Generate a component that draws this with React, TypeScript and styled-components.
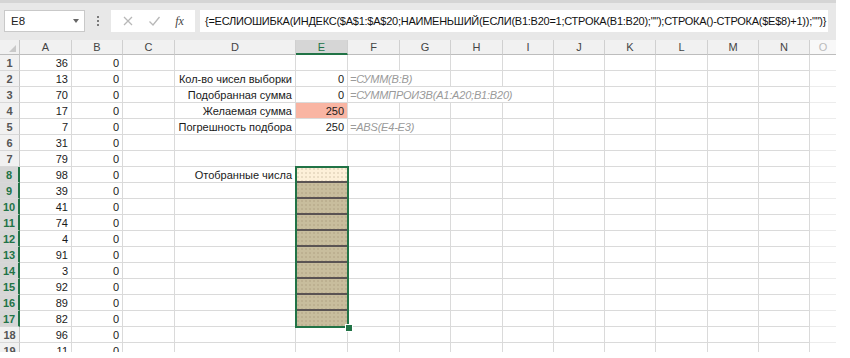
import React from "react";
import styled, { createGlobalStyle, css } from "styled-components";

const GlobalStyle = createGlobalStyle`
  html, body {
    margin: 0;
    padding: 0;
    background: #fff;
  }
  body {
    font-family: "Liberation Sans", Arial, sans-serif;
    color: #222;
  }
`;

const COLS = [20, 52, 51, 52, 121, 52, 52, 51, 52, 51, 51, 51, 52, 51, 51, 26];
const LETTERS = ["A", "B", "C", "D", "E", "F", "G", "H", "I", "J", "K", "L", "M", "N", "O"];

const AVALUES = [36, 13, 70, 17, 7, 31, 79, 98, 39, 41, 74, 4, 91, 3, 92, 89, 82, 96, 11];

const LABELS: Record<number, string> = {
  2: "Кол-во чисел выборки",
  3: "Подобранная сумма",
  4: "Желаемая сумма",
  5: "Погрешность подбора",
  8: "Отобранные числа",
};

const EVALUES: Record<number, string> = { 2: "0", 3: "0", 4: "250", 5: "250" };

const FORMULAS: Record<number, string> = {
  2: "=СУММ(B:B)",
  3: "=СУММПРОИЗВ(A1:A20;B1:B20)",
  5: "=ABS(E4-E3)",
};

const Page = styled.div`
  width: 850px;
  height: 358px;
  overflow: hidden;
  background: #fff;
`;

const FormulaBar = styled.div`
  border-top: 3px solid #d5d5d5;
  background: #e8e8e8;
  display: flex;
  align-items: flex-start;
  padding: 7px 0 0 4px;
  box-sizing: border-box;
  height: 40px;
  width: 836px;
`;

const NameBox = styled.div`
  width: 81px;
  height: 22px;
  box-sizing: border-box;
  background: #fff;
  border: 1px solid #c9c9c9;
  display: flex;
  align-items: center;
  justify-content: space-between;
  padding: 0 5px 0 6px;
  font-size: 11.5px;
  color: #222;
`;

const Caret = styled.span`
  width: 0;
  height: 0;
  border-left: 3px solid transparent;
  border-right: 3px solid transparent;
  border-top: 4px solid #666;
`;

const Grip = styled.div`
  width: 26px;
  height: 22px;
  display: flex;
  flex-direction: column;
  align-items: center;
  justify-content: center;
  gap: 2px;
  & span {
    width: 2px;
    height: 2px;
    background: #7a7a7a;
  }
`;

const FxPanel = styled.div`
  width: 84px;
  height: 22px;
  box-sizing: border-box;
  background: #fff;
  display: flex;
  align-items: center;
  justify-content: space-around;
  padding: 0 4px;
`;

const FxLabel = styled.span`
  font-family: "Liberation Serif", serif;
  font-style: italic;
  font-size: 12px;
  color: #444;
`;

const FormulaInput = styled.div`
  margin-left: 5px;
  width: 628px;
  height: 22px;
  box-sizing: border-box;
  background: #fff;
  display: flex;
  align-items: center;
  padding-left: 5px;
  font-size: 11px;
  letter-spacing: -0.25px;
  white-space: nowrap;
  overflow: hidden;
  color: #111;
`;

const SheetClip = styled.div`
  height: 312px;
  overflow: hidden;
`;

const Sheet = styled.div`
  position: relative;
  display: grid;
  grid-template-columns: ${COLS.map((c) => `${c}px`).join(" ")};
  grid-template-rows: 15px;
  grid-auto-rows: 16px;
  width: 836px;
  font-size: 11px;
`;

const ColHead = styled.div<{ $active?: boolean; $faded?: boolean }>`
  box-sizing: border-box;
  background: #f1f1f1;
  border-right: 1px solid #d0d0d0;
  border-bottom: 1px solid #bdbdbd;
  display: flex;
  align-items: center;
  justify-content: center;
  font-size: 11px;
  color: #444;
  ${(p) =>
    p.$active &&
    css`
      background: #d6d6d6;
      color: #217346;
      border-bottom: 2px solid #217346;
    `}
  ${(p) =>
    p.$faded &&
    css`
      background: #f8f8f8;
      color: #bbb;
      border-right: none;
    `}
`;

const Corner = styled.div`
  box-sizing: border-box;
  background: #f1f1f1;
  border-right: 1px solid #c6c6c6;
  border-bottom: 1px solid #bdbdbd;
  display: flex;
  align-items: flex-end;
  justify-content: flex-end;
  padding: 0 3px 2px 0;
  &::after {
    content: "";
    width: 0;
    height: 0;
    border-left: 7px solid transparent;
    border-bottom: 7px solid #c9c9c9;
  }
`;

const RowHead = styled.div<{ $active?: boolean }>`
  box-sizing: border-box;
  background: #f1f1f1;
  border-right: 1px solid #c6c6c6;
  border-bottom: 1px solid #d8d8d8;
  display: flex;
  align-items: center;
  justify-content: center;
  font-size: 11px;
  font-weight: bold;
  color: #555;
  ${(p) =>
    p.$active &&
    css`
      background: #d6d6d6;
      color: #217346;
      border-right: 2px solid #217346;
    `}
`;

type Fill = "none" | "salmon" | "peach" | "tan";

const fills: Record<Fill, string> = {
  none: "transparent",
  salmon: "#f9b5a3",
  peach: "#fdf0d9",
  tan: "#c8bd9d",
};

const Cell = styled.div<{ $span?: number; $fill?: Fill; $divider?: boolean; $faded?: boolean }>`
  box-sizing: border-box;
  grid-column: span ${(p) => p.$span ?? 1};
  border-right: 1px solid #dadada;
  border-bottom: 1px solid #dadada;
  background-color: ${(p) => fills[p.$fill ?? "none"]};
  display: flex;
  align-items: center;
  justify-content: flex-end;
  padding: 0 3px;
  white-space: nowrap;
  overflow: hidden;
  color: #1a1a1a;
  ${(p) =>
    (p.$fill === "peach" || p.$fill === "tan") &&
    css`
      background-image: radial-gradient(rgba(120, 100, 70, 0.3) 0.6px, transparent 0.8px);
      background-size: 4px 4px;
    `}
  ${(p) =>
    p.$divider &&
    css`
      border-bottom: 2px solid #5a5353;
    `}
  ${(p) =>
    p.$faded &&
    css`
      border-right: none;
      border-bottom-color: #ececec;
    `}
`;

const FormulaNote = styled(Cell)`
  justify-content: flex-start;
  padding-left: 2px;
  font-style: italic;
  letter-spacing: -0.2px;
  color: #9a9a9a;
`;

const Selection = styled.div`
  position: absolute;
  left: 295px;
  top: 126px;
  width: 54px;
  height: 162px;
  box-sizing: border-box;
  border: 2px solid #217346;
  pointer-events: none;
`;

const Handle = styled.div`
  position: absolute;
  left: 345px;
  top: 284px;
  width: 6px;
  height: 6px;
  background: #217346;
  border: 1px solid #fff;
`;

const XIcon = () => (
  <svg width="12" height="12" viewBox="0 0 12 12">
    <path d="M2 2 L10 10 M10 2 L2 10" stroke="#b8b8b8" strokeWidth="1.3" fill="none" />
  </svg>
);

const CheckIcon = () => (
  <svg width="13" height="12" viewBox="0 0 13 12">
    <path d="M1.5 6.5 L5 10 L11.5 2" stroke="#b8b8b8" strokeWidth="1.3" fill="none" />
  </svg>
);

const FORMULA =
  '{=ЕСЛИОШИБКА(ИНДЕКС($A$1:$A$20;НАИМЕНЬШИЙ(ЕСЛИ(B1:B20=1;СТРОКА(B1:B20);"");СТРОКА()-СТРОКА($E$8)+1));"")}';

const SheetRow = ({ r }: { r: number }) => {
  const active = r >= 8 && r <= 17;
  let eFill: Fill = "none";
  if (r === 4) eFill = "salmon";
  if (r === 8) eFill = "peach";
  if (r > 8 && r <= 17) eFill = "tan";
  const formula = FORMULAS[r];
  return (
    <>
      <RowHead $active={active}>{r}</RowHead>
      <Cell>{AVALUES[r - 1]}</Cell>
      <Cell>0</Cell>
      <Cell />
      <Cell>{LABELS[r] ?? ""}</Cell>
      <Cell $fill={eFill} $divider={r >= 8 && r < 17}>
        {EVALUES[r] ?? ""}
      </Cell>
      {formula ? (
        <FormulaNote $span={r === 3 ? 4 : 2}>{formula}</FormulaNote>
      ) : (
        <>
          <Cell />
          <Cell />
        </>
      )}
      {Array.from({ length: formula ? (r === 3 ? 5 : 7) : 7 }).map((_, i) => (
        <Cell key={i} />
      ))}
      <Cell $faded />
    </>
  );
};

export default function App() {
  const rows = Array.from({ length: 19 }, (_, i) => i + 1);
  return (
    <Page>
      <GlobalStyle />
      <FormulaBar>
        <NameBox>
          E8
          <Caret />
        </NameBox>
        <Grip>
          <span />
          <span />
          <span />
        </Grip>
        <FxPanel>
          <XIcon />
          <CheckIcon />
          <FxLabel>fx</FxLabel>
        </FxPanel>
        <FormulaInput>{FORMULA}</FormulaInput>
      </FormulaBar>
      <SheetClip>
        <Sheet>
          <Corner />
          {LETTERS.map((l) => (
            <ColHead key={l} $active={l === "E"} $faded={l === "O"}>
              {l}
            </ColHead>
          ))}
          {rows.map((r) => (
            <SheetRow key={r} r={r} />
          ))}
          <Selection />
          <Handle />
        </Sheet>
      </SheetClip>
    </Page>
  );
}
